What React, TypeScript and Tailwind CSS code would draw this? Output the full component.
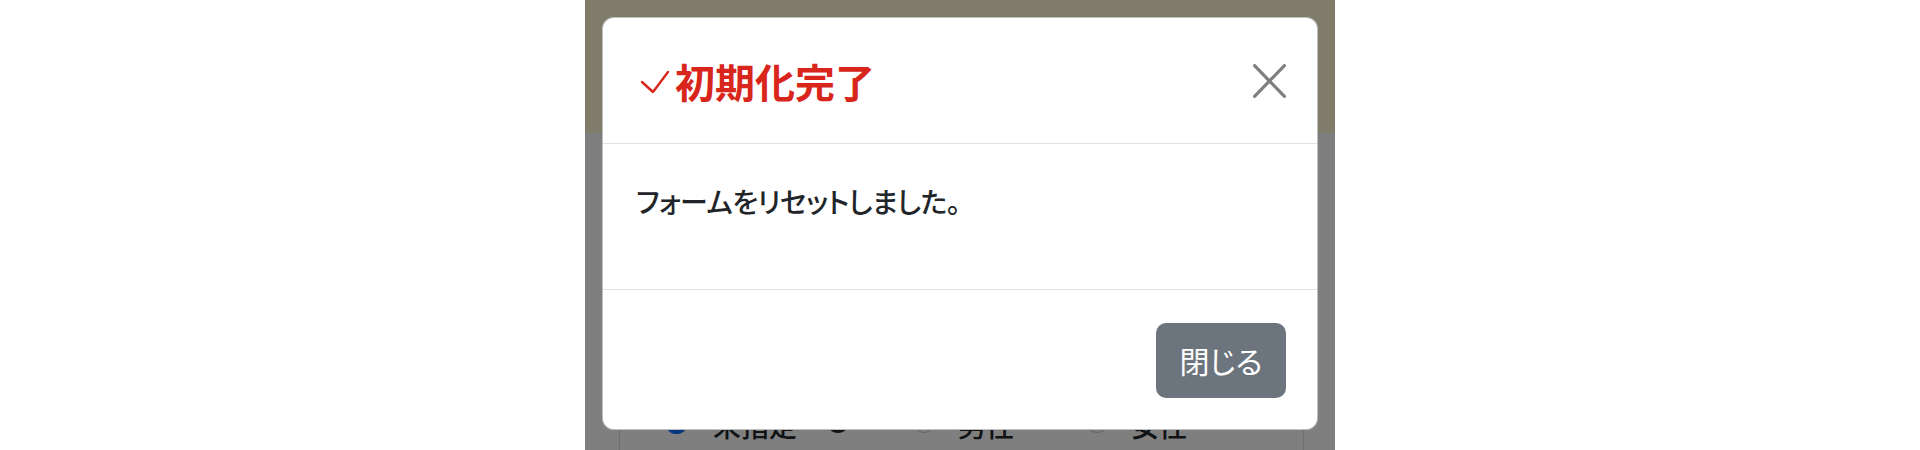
import React from "react";

const jp = "font-['Noto_Sans_CJK_JP','Noto_Sans',sans-serif]";

function Radio({ checked, dark }: { checked?: boolean; dark?: boolean }) {
  if (checked) {
    return (
      <span className="flex h-[23px] w-[23px] items-center justify-center rounded-full bg-[#0d6efd]">
        <span className="block h-[9px] w-[9px] rounded-full bg-white" />
      </span>
    );
  }
  if (dark) {
    return <span className="block h-[22px] w-[22px] rounded-full bg-[#212529]" />;
  }
  return <span className="block h-[22px] w-[22px] rounded-full border border-[#c4c8cc] bg-white" />;
}

export default function App() {
  return (
    <div className={`flex h-[450px] w-full justify-center overflow-hidden bg-white ${jp}`}>
      <div className="relative h-[450px] w-[750px] bg-white">
        <div className="h-[133px] bg-[#fef8d8]" />
        <div className="ml-[34px] mr-[31px] mt-[17px] h-[400px] rounded-[8px] border border-[#dedede] pt-[251px]">
          <div className="flex h-[40px] items-center text-[28px] font-medium leading-[40px] text-[#212529]">
            <div className="ml-[45px]">
              <Radio checked />
            </div>
            <span className="ml-[25px] mt-[6px]">未指定</span>
            <div className="ml-[30px]">
              <Radio dark />
            </div>
            <div className="ml-[64px]">
              <Radio />
            </div>
            <span className="ml-[23px] mt-[6px]">男性</span>
            <div className="ml-[72px]">
              <Radio />
            </div>
            <span className="ml-[23px] mt-[6px]">女性</span>
          </div>
        </div>

        <div className="absolute inset-0 bg-black/50">
          <div className="absolute left-[17px] right-[17px] top-[17px] flex flex-col overflow-hidden rounded-[12px] border border-black/25 bg-white">
            <div className="flex h-[126px] items-center justify-between border-b border-[#dee2e6] pl-[37px] pr-[31px]">
              <div className="flex items-center">
                <svg width="30" height="24" viewBox="0 0 30 24" className="mt-[3px]">
                  <polyline
                    points="2,12 13,22 28,2"
                    fill="none"
                    stroke="#d9261c"
                    strokeWidth="2.4"
                    strokeLinecap="round"
                    strokeLinejoin="round"
                  />
                </svg>
                <h5 className="ml-[5px] text-[40px] font-bold leading-[48px] text-[#d9261c]">初期化完了</h5>
              </div>
              <button className="flex h-[34px] w-[33px] items-center justify-center">
                <svg width="33" height="34" viewBox="0 0 33 34">
                  <line x1="1.6" y1="1.6" x2="31.4" y2="32.4" stroke="#7f7f7f" strokeWidth="3.2" strokeLinecap="round" />
                  <line x1="31.4" y1="1.6" x2="1.6" y2="32.4" stroke="#7f7f7f" strokeWidth="3.2" strokeLinecap="round" />
                </svg>
              </button>
            </div>
            <div className="h-[145px] pl-[33px] pt-[35px]">
              <p className="text-[28px] font-medium leading-[45px] tracking-[-0.5px] text-[#212529] [font-feature-settings:'palt']">
                フォームをリセットしました。
              </p>
            </div>
            <div className="flex h-[140px] items-start justify-end border-t border-[#dee2e6] pr-[31px] pt-[33px]">
              <button className="flex h-[75px] w-[130px] items-center justify-center rounded-[10px] bg-[#6c757d] text-[30px] leading-[45px] text-white [font-feature-settings:'palt']">
                閉じる
              </button>
            </div>
          </div>
        </div>
      </div>
    </div>
  );
}
